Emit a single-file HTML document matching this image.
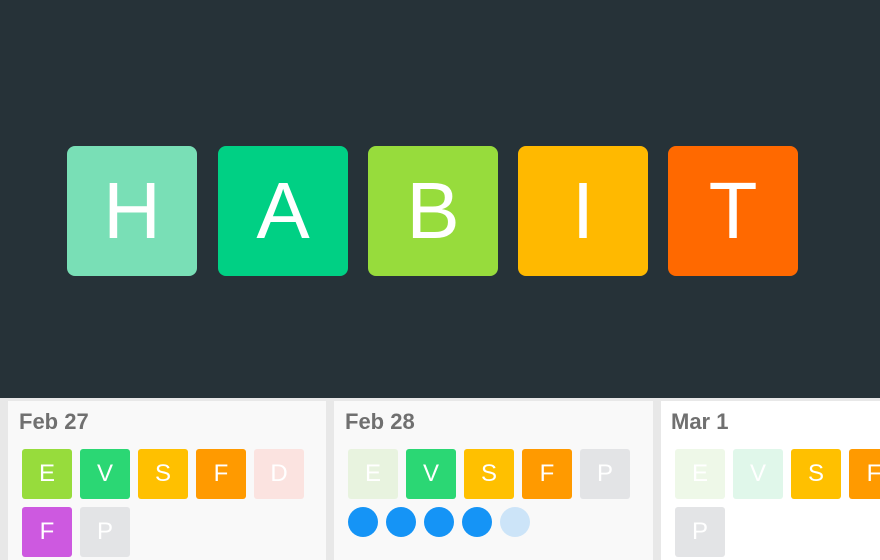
<!DOCTYPE html>
<html><head><style>
*{margin:0;padding:0;box-sizing:border-box}
body{width:880px;height:560px;overflow:hidden;background:#e8e8e8;font-family:"Liberation Sans",sans-serif;position:relative}
.top{position:absolute;left:0;top:0;width:880px;height:398px;background:#263238}
.big{position:absolute;top:146px;width:130px;height:130px;border-radius:8px;color:#fff;font-size:80px;font-weight:300;display:flex;align-items:center;justify-content:center;line-height:1}
.card{position:absolute;top:401px;height:159px}
.t{position:absolute;font-size:22px;font-weight:bold;color:#707070;top:409px}
.s{position:absolute;width:50px;height:50px;border-radius:3px;color:#fff;font-size:24px;display:flex;align-items:center;justify-content:center}
.c{position:absolute;width:30px;height:30px;border-radius:50%;top:507px;background:#1594f6}
</style></head><body>
<div class="top"></div>
<div class="big" style="left:67px;background:#79dfb6">H</div>
<div class="big" style="left:218px;background:#00d084">A</div>
<div class="big" style="left:368px;background:#97dc3c">B</div>
<div class="big" style="left:518px;background:#ffb900">I</div>
<div class="big" style="left:668px;background:#ff6900">T</div>

<div class="card" style="left:8px;width:318px;background:#f9f9f9"></div>
<div class="card" style="left:334px;width:319px;background:#f9f9f9"></div>
<div class="card" style="left:661px;width:219px;background:#fff"></div>

<div class="t" style="left:19px">Feb 27</div>
<div class="t" style="left:345px">Feb 28</div>
<div class="t" style="left:671px">Mar 1</div>

<div class="s" style="left:22px;top:449px;background:#97dc3c">E</div>
<div class="s" style="left:80px;top:449px;background:#2bd774">V</div>
<div class="s" style="left:138px;top:449px;background:#ffc000">S</div>
<div class="s" style="left:196px;top:449px;background:#ff9a00">F</div>
<div class="s" style="left:254px;top:449px;background:#fbe3e0">D</div>
<div class="s" style="left:22px;top:507px;background:#cd59e0">F</div>
<div class="s" style="left:80px;top:507px;background:#e3e4e6">P</div>

<div class="s" style="left:348px;top:449px;background:#e8f3df">E</div>
<div class="s" style="left:406px;top:449px;background:#2bd774">V</div>
<div class="s" style="left:464px;top:449px;background:#ffc000">S</div>
<div class="s" style="left:522px;top:449px;background:#ff9a00">F</div>
<div class="s" style="left:580px;top:449px;background:#e3e4e6">P</div>
<div class="c" style="left:348px"></div>
<div class="c" style="left:386px"></div>
<div class="c" style="left:424px"></div>
<div class="c" style="left:462px"></div>
<div class="c" style="left:500px;background:#cce4f8"></div>

<div class="s" style="left:675px;top:449px;background:#eef8e8">E</div>
<div class="s" style="left:733px;top:449px;background:#e0f7ea">V</div>
<div class="s" style="left:791px;top:449px;background:#ffc000">S</div>
<div class="s" style="left:849px;top:449px;background:#ff9a00">F</div>
<div class="s" style="left:675px;top:507px;background:#e3e4e6">P</div>
</body></html>
